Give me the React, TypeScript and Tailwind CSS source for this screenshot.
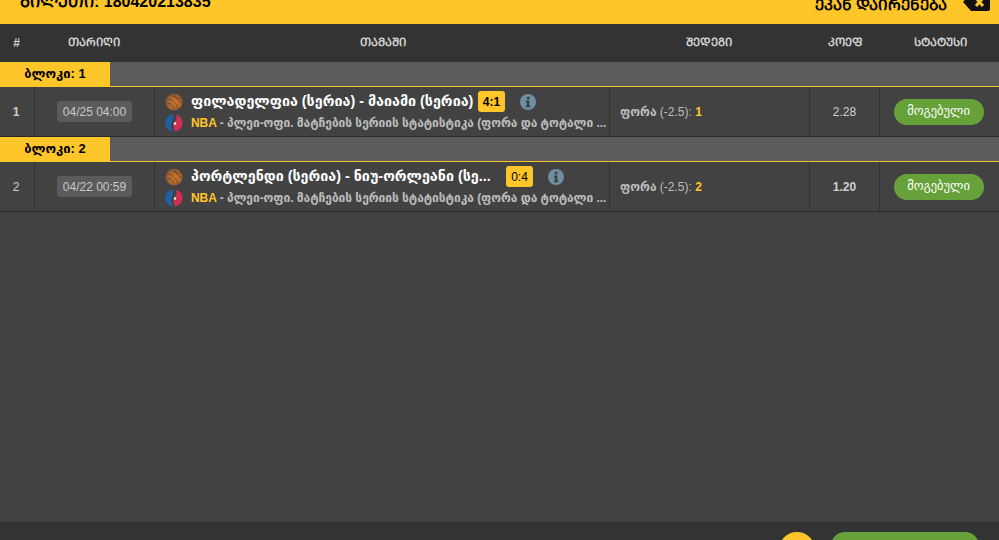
const columns = "grid grid-cols-[35px_120px_455px_200px_70px_119px]";
const fontStack = "font-['Liberation_Sans','DejaVu_Sans',sans-serif]";

const BallIcon = ({ id }: { id: string }) => (
    <svg width="18" height="18" viewBox="0 0 18 18" className="shrink-0">
        <defs>
            <radialGradient id={id} cx="0.55" cy="0.55" r="0.6">
                <stop offset="0" stopColor="#d0782c" />
                <stop offset="0.7" stopColor="#a5622f" />
                <stop offset="1" stopColor="#6b5440" />
            </radialGradient>
        </defs>
        <circle cx="9" cy="9" r="8.5" fill={`url(#${id})`} />
        <path d="M2 6c4 0 9 3 11 10M6 1.5c3 3 7 4 11 4M1.5 11c3-1 6-1 8 5.5M9 1c2 4 5 8 8 9" fill="none" stroke="#5c3a20" strokeWidth="0.8" opacity="0.8" />
    </svg>
);

const LeagueIcon = () => (
    <svg width="18" height="18" viewBox="0 0 18 18" className="shrink-0">
        <path d="M7.5.6A8.5 8.5 0 0 0 9 17.5C6 15 5 12 6.5 9 8 6 9 3 7.5.6z" fill="#1b62a8" />
        <path d="M11 .7A8.5 8.5 0 0 1 10.5 17.4C8.5 15 8 13 9 10.5 10.5 7 12.5 4 11 .7z" fill="#cf2f55" />
        <circle cx="10" cy="9.5" r="1.2" fill="#fff" />
    </svg>
);

const InfoIcon = () => (
    <svg width="16" height="16" viewBox="0 0 16 16" className="shrink-0">
        <circle cx="8" cy="8" r="8" fill="#6f8ea3" />
        <circle cx="8.2" cy="3.9" r="1.5" fill="#3f3f3f" />
        <path d="M5.8 6.6h3.6v5.2h1v1.4H5.8v-1.4h1V8H5.8z" fill="#3f3f3f" />
    </svg>
);

const rows = [
    {
        block: "ბლოკი: 1",
        num: "1",
        numWeight: "font-bold",
        date: "04/25 04:00",
        title: "ფილადელფია (სერია) - მაიამი (სერია)",
        titleBox: "w-[282px]",
        score: "4:1",
        scoreWeight: "font-bold",
        infoMargin: "ml-[15px]",
        pick: "1",
        odds: "2.28",
        oddsWeight: "font-normal",
    },
    {
        block: "ბლოკი: 2",
        num: "2",
        numWeight: "font-normal",
        date: "04/22 00:59",
        title: "პორტლენდი (სერია) - ნიუ-ორლეანი (სე...",
        titleBox: "w-[310px]",
        score: "0:4",
        scoreWeight: "font-normal",
        infoMargin: "ml-[15px]",
        pick: "2",
        odds: "1.20",
        oddsWeight: "font-bold",
    },
];

export default function App() {
    return (
        <div className={`h-[540px] w-[999px] overflow-hidden flex flex-col bg-[#424242] ${fontStack}`}>
            {/* Top bar, cut by the window edge */}
            <div className="h-6 shrink-0 bg-[#ffc629] flex justify-between overflow-hidden text-black">
                <div className="pl-5 -mt-[8px] text-[16px] leading-5 font-bold">ᲑᲘᲚᲔᲗᲘ: 180420213835</div>
                <div className="flex gap-[15px] pr-[9px]">
                    <span className="-mt-[7px] text-[15px] leading-6 font-bold">ᲔᲙᲐᲜ ᲓᲐᲘᲠᲔᲜᲔᲑᲐ</span>
                    <svg width="28" height="20" viewBox="0 0 28 20" className="-mt-[8px]">
                        <path d="M9 1h17a2 2 0 0 1 2 2v14a2 2 0 0 1-2 2H9l-8-9z" fill="#111" />
                        <path d="M14 6l7 8M21 6l-7 8" stroke="#ffc629" strokeWidth="3" />
                    </svg>
                </div>
            </div>

            {/* Column headers */}
            <div className={`${columns} h-[38px] shrink-0 items-center bg-[#333] text-[11.5px] font-bold text-[#d0d0d0] text-center`}>
                <div className="pr-[2px] text-[12px]">#</div>
                <div className="pr-[2px]">ᲗᲐᲠᲘᲦᲘ</div>
                <div>ᲗᲐᲛᲐᲨᲘ</div>
                <div className="pr-[2px]">ᲨᲔᲓᲔᲒᲘ</div>
                <div>ᲙᲝᲔᲤ</div>
                <div className="pl-[1px]">ᲡᲢᲐᲢᲣᲡᲘ</div>
            </div>

            {rows.map((row) => (
                <div key={row.num}>
                    <div className="h-[25px] bg-[#5c5b5c] border-b border-[#ffc629]">
                        <div className="w-[110px] h-full bg-[#ffc629] flex items-center justify-center text-[13px] font-bold text-black">
                            {row.block}
                        </div>
                    </div>
                    <div className={`${columns} h-[50px] border-b border-[#292929] text-[#cfcfcf] text-[12px]`}>
                        <div className={`flex items-center justify-center pr-[2px] border-r border-[#333] ${row.numWeight}`}>{row.num}</div>
                        <div className="flex items-center justify-center border-r border-[#333]">
                            <span className="w-[75px] h-[21px] flex items-center justify-center rounded-[3px] bg-[#5c5b5c] text-[12px] text-[#c8c8c8]">
                                {row.date}
                            </span>
                        </div>
                        <div className="flex flex-col justify-center pl-[10px] border-r border-[#333] min-w-0">
                            <div className="flex items-center h-[23px]">
                                <BallIcon id={`ball-${row.num}`} />
                                <span className={`ml-2 text-[14.3px] font-bold text-white whitespace-nowrap ${row.titleBox}`}>{row.title}</span>
                                <span className={`ml-[5px] w-[27px] h-[21px] flex items-center justify-center rounded-[3px] bg-[#ffc629] text-black text-[12px] ${row.scoreWeight}`}>
                                    {row.score}
                                </span>
                                <span className={row.infoMargin}>
                                    <InfoIcon />
                                </span>
                            </div>
                            <div className="flex items-center h-[20px] overflow-hidden">
                                <LeagueIcon />
                                <span className="ml-2 text-[12px] font-bold whitespace-nowrap tracking-[-0.05px] text-[#bdbdbd]">
                                    <span className="text-[#ffc629]">NBA</span> - პლეი-ოფი. მატჩების სერიის სტატისტიკა (ფორა და ტოტალი ...
                                </span>
                            </div>
                        </div>
                        <div className="flex items-center pl-[10px] border-r border-[#333] text-[#bdbdbd]">
                            <span>
                                <span className="font-bold">ფორა</span> (-2.5): <span className="font-bold text-[#ffc629]">{row.pick}</span>
                            </span>
                        </div>
                        <div className={`flex items-center justify-center border-r border-[#333] ${row.oddsWeight}`}>{row.odds}</div>
                        <div className="flex items-center justify-center pr-[2px]">
                            <span className="w-[90px] h-[26px] flex items-center justify-center rounded-full bg-[#66a13a] text-white text-[12.5px]">
                                მოგებული
                            </span>
                        </div>
                    </div>
                </div>
            ))}

            <div className="flex-1" />

            {/* Bottom bar, cut by the window edge */}
            <div className="h-[18px] shrink-0 bg-[#333] flex justify-end gap-4 pt-[10px] pr-5 overflow-hidden">
                <div className="w-[36px] h-[36px] rounded-full bg-[#ffc629] shrink-0" />
                <div className="w-[148px] h-[36px] rounded-[14px] bg-[#66a13a] shrink-0" />
            </div>
        </div>
    );
}
